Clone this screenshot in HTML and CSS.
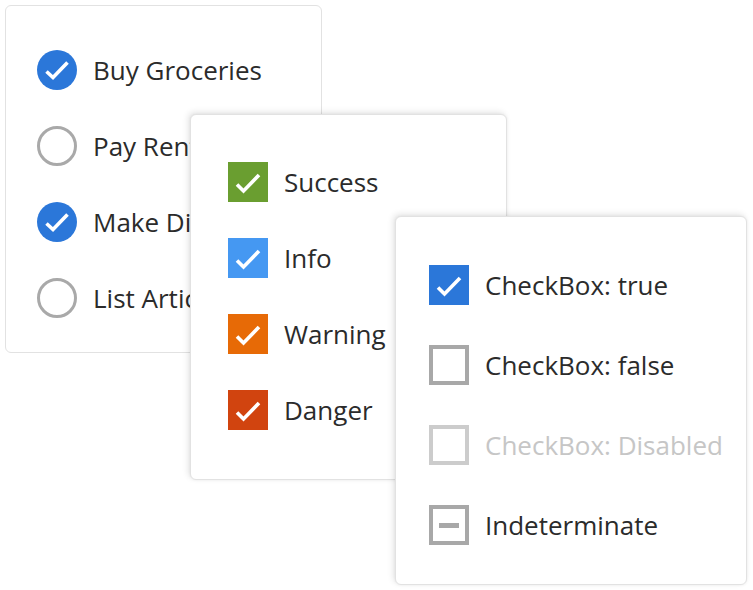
FILE: index.html
```html
<!DOCTYPE html>
<html>
<head>
<meta charset="utf-8">
<link rel="stylesheet" href="styles.css">
</head>
<body>
<div class="canvas">
  <div class="card card-radio">
    <ul class="list">
      <li class="item"><span class="radio on"><svg viewBox="0 0 40 40"><path d="M9.5 21.5 L16 27.5 L30.5 12.5" /></svg></span><span class="label">Buy Groceries</span></li>
      <li class="item"><span class="radio off"></span><span class="label">Pay Rent</span></li>
      <li class="item"><span class="radio on"><svg viewBox="0 0 40 40"><path d="M9.5 21.5 L16 27.5 L30.5 12.5" /></svg></span><span class="label">Make Dinner</span></li>
      <li class="item"><span class="radio off"></span><span class="label">List Articles</span></li>
    </ul>
  </div>
  <div class="card card-color">
    <ul class="list">
      <li class="item"><span class="box success"><svg viewBox="0 0 40 40"><path d="M9 22.5 L15.5 29 L31 13" /></svg></span><span class="label">Success</span></li>
      <li class="item"><span class="box info"><svg viewBox="0 0 40 40"><path d="M9 22.5 L15.5 29 L31 13" /></svg></span><span class="label">Info</span></li>
      <li class="item"><span class="box warning"><svg viewBox="0 0 40 40"><path d="M9 22.5 L15.5 29 L31 13" /></svg></span><span class="label">Warning</span></li>
      <li class="item"><span class="box danger"><svg viewBox="0 0 40 40"><path d="M9 22.5 L15.5 29 L31 13" /></svg></span><span class="label">Danger</span></li>
    </ul>
  </div>
  <div class="card card-state">
    <ul class="list list-wide">
      <li class="item"><span class="box checked"><svg viewBox="0 0 40 40"><path d="M9 22.5 L15.5 29 L31 13" /></svg></span><span class="label">CheckBox: true</span></li>
      <li class="item"><span class="box empty"></span><span class="label">CheckBox: false</span></li>
      <li class="item disabled"><span class="box empty"></span><span class="label">CheckBox: Disabled</span></li>
      <li class="item"><span class="box empty indet"><span class="dash"></span></span><span class="label">Indeterminate</span></li>
    </ul>
  </div>
</div>
</body>
</html>
```
FILE: styles.css
```css
* { box-sizing: border-box; }
html, body { margin: 0; padding: 0; background: #fff; }
body {
  font-family: "Open Sans", "Noto Sans", sans-serif;
  color: #2b2b2b;
  width: 753px;
  height: 590px;
  overflow: hidden;
}
.canvas { position: relative; width: 753px; height: 590px; }

.card {
  position: absolute;
  background: #fff;
  border: 1px solid #e2e2e2;
  border-radius: 6px;
  box-shadow: -2px -2px 6px rgba(0,0,0,0.10), 0 0 3px rgba(0,0,0,0.06);
}
.card-radio { left: 5px; top: 5px; width: 317px; height: 348px; padding: 26px 0 0 31px; z-index: 1; box-shadow: none; }
.card-color { left: 190px; top: 114px; width: 317px; height: 366px; padding: 29px 0 0 37px; z-index: 2; }
.card-state { left: 395px; top: 216px; width: 352px; height: 369px; padding: 28px 0 0 33px; z-index: 3; }

.list { list-style: none; margin: 0; padding: 0; }
.item {
  display: flex;
  align-items: center;
  height: 76px;
  gap: 16px;
  font-size: 26px;
  white-space: nowrap;
}
.list-wide .item { height: 80px; }

.radio {
  flex: none;
  width: 40px; height: 40px;
  border-radius: 50%;
  display: flex; align-items: center; justify-content: center;
}
.radio.on { background: #2b77d9; }
.radio.off { border: 3px solid #a9a9a9; }
.radio svg, .box svg { width: 40px; height: 40px; display: block; }
.radio svg path, .box svg path {
  fill: none; stroke: #fff; stroke-width: 3.6; stroke-linecap: butt; stroke-linejoin: miter;
}

.box {
  flex: none;
  width: 40px; height: 40px;
  display: flex; align-items: center; justify-content: center;
}
.success { background: #6a9e30; }
.info { background: #4598f2; }
.warning { background: #e76a06; }
.danger { background: #d1440f; }
.checked { background: #2b77d9; }
.empty { border: 4px solid #a8a8a8; background: #fff; }
.disabled .empty { border-color: #cccccc; }
.disabled .label { color: #c6c6c6; }
.dash { width: 20px; height: 5px; background: #a8a8a8; }
```
